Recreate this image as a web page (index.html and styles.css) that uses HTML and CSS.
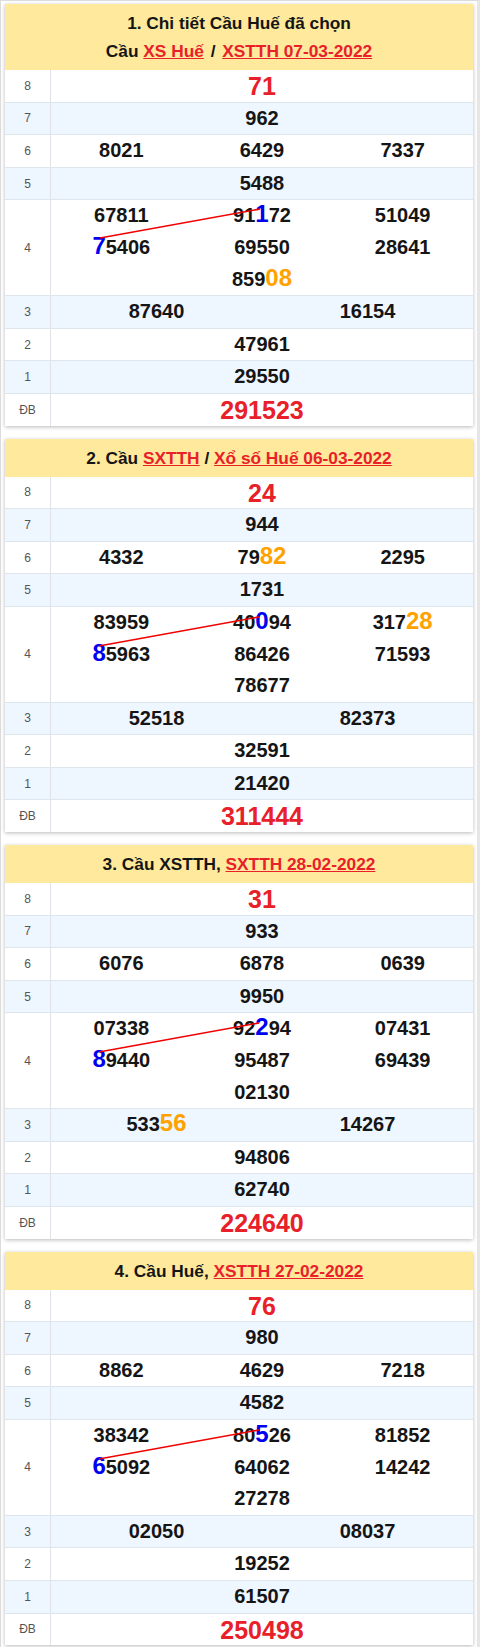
FILE: index.html
```html
<!DOCTYPE html>
<html lang="vi">
<head>
<meta charset="utf-8">
<title>Cầu Huế</title>
<link rel="stylesheet" href="styles.css">
</head>
<body>
<div class="page">

  <div class="card">
    <div class="card-head">
      <div>1. Chi tiết Cầu Huế đã chọn</div>
      <div>Cầu <a class="lnk">XS Huế</a> <span class="sep">/</span> <a class="lnk">XSTTH 07-03-2022</a></div>
    </div>
    <div class="row"><div class="lbl">8</div><div class="val"><span class="sp">71</span></div></div>
    <div class="row alt"><div class="lbl">7</div><div class="val">962</div></div>
    <div class="row"><div class="lbl">6</div><div class="val c3"><span>8021</span><span>6429</span><span>7337</span></div></div>
    <div class="row alt"><div class="lbl">5</div><div class="val">5488</div></div>
    <div class="row"><div class="lbl">4</div>
      <div class="val c3 g4">
        <div class="col"><span>67811</span><span><span class="hb">7</span>5406</span></div>
        <div class="col"><span>91<span class="hb">1</span>72</span><span>69550</span><span>859<span class="ho">08</span></span></div>
        <div class="col"><span>51049</span><span>28641</span></div>
        <svg class="link-line"><line x1="49" y1="38" x2="209" y2="9"/></svg>
      </div>
    </div>
    <div class="row alt"><div class="lbl">3</div><div class="val c2"><span>87640</span><span>16154</span></div></div>
    <div class="row"><div class="lbl">2</div><div class="val">47961</div></div>
    <div class="row alt"><div class="lbl">1</div><div class="val">29550</div></div>
    <div class="row"><div class="lbl">ĐB</div><div class="val"><span class="sp">291523</span></div></div>
  </div>

  <div class="card">
    <div class="card-head">
      <div>2. Cầu <a class="lnk">SXTTH</a> / <a class="lnk">Xổ số Huế 06-03-2022</a></div>
    </div>
    <div class="row"><div class="lbl">8</div><div class="val"><span class="sp">24</span></div></div>
    <div class="row alt"><div class="lbl">7</div><div class="val">944</div></div>
    <div class="row"><div class="lbl">6</div><div class="val c3"><span>4332</span><span>79<span class="ho">82</span></span><span>2295</span></div></div>
    <div class="row alt"><div class="lbl">5</div><div class="val">1731</div></div>
    <div class="row"><div class="lbl">4</div>
      <div class="val c3 g4">
        <div class="col"><span>83959</span><span><span class="hb">8</span>5963</span></div>
        <div class="col"><span>40<span class="hb">0</span>94</span><span>86426</span><span>78677</span></div>
        <div class="col"><span>317<span class="ho">28</span></span><span>71593</span></div>
        <svg class="link-line"><line x1="48" y1="39" x2="208" y2="10"/></svg>
      </div>
    </div>
    <div class="row alt"><div class="lbl">3</div><div class="val c2"><span>52518</span><span>82373</span></div></div>
    <div class="row"><div class="lbl">2</div><div class="val">32591</div></div>
    <div class="row alt"><div class="lbl">1</div><div class="val">21420</div></div>
    <div class="row"><div class="lbl">ĐB</div><div class="val"><span class="sp">311444</span></div></div>
  </div>

  <div class="card">
    <div class="card-head">
      <div>3. Cầu XSTTH, <a class="lnk">SXTTH 28-02-2022</a></div>
    </div>
    <div class="row"><div class="lbl">8</div><div class="val"><span class="sp">31</span></div></div>
    <div class="row alt"><div class="lbl">7</div><div class="val">933</div></div>
    <div class="row"><div class="lbl">6</div><div class="val c3"><span>6076</span><span>6878</span><span>0639</span></div></div>
    <div class="row alt"><div class="lbl">5</div><div class="val">9950</div></div>
    <div class="row"><div class="lbl">4</div>
      <div class="val c3 g4">
        <div class="col"><span>07338</span><span><span class="hb">8</span>9440</span></div>
        <div class="col"><span>92<span class="hb">2</span>94</span><span>95487</span><span>02130</span></div>
        <div class="col"><span>07431</span><span>69439</span></div>
        <svg class="link-line"><line x1="48" y1="39" x2="208" y2="10"/></svg>
      </div>
    </div>
    <div class="row alt"><div class="lbl">3</div><div class="val c2"><span>533<span class="ho">56</span></span><span>14267</span></div></div>
    <div class="row"><div class="lbl">2</div><div class="val">94806</div></div>
    <div class="row alt"><div class="lbl">1</div><div class="val">62740</div></div>
    <div class="row"><div class="lbl">ĐB</div><div class="val"><span class="sp">224640</span></div></div>
  </div>

  <div class="card">
    <div class="card-head">
      <div>4. Cầu Huế, <a class="lnk">XSTTH 27-02-2022</a></div>
    </div>
    <div class="row"><div class="lbl">8</div><div class="val"><span class="sp">76</span></div></div>
    <div class="row alt"><div class="lbl">7</div><div class="val">980</div></div>
    <div class="row"><div class="lbl">6</div><div class="val c3"><span>8862</span><span>4629</span><span>7218</span></div></div>
    <div class="row alt"><div class="lbl">5</div><div class="val">4582</div></div>
    <div class="row"><div class="lbl">4</div>
      <div class="val c3 g4">
        <div class="col"><span>38342</span><span><span class="hb">6</span>5092</span></div>
        <div class="col"><span>80<span class="hb">5</span>26</span><span>64062</span><span>27278</span></div>
        <div class="col"><span>81852</span><span>14242</span></div>
        <svg class="link-line"><line x1="48" y1="39" x2="208" y2="10"/></svg>
      </div>
    </div>
    <div class="row alt"><div class="lbl">3</div><div class="val c2"><span>02050</span><span>08037</span></div></div>
    <div class="row"><div class="lbl">2</div><div class="val">19252</div></div>
    <div class="row alt"><div class="lbl">1</div><div class="val">61507</div></div>
    <div class="row"><div class="lbl">ĐB</div><div class="val"><span class="sp">250498</span></div></div>
  </div>

</div>
</body>
</html>
```

FILE: styles.css
```css
* { box-sizing: border-box; }

body {
  margin: 0;
  background: #fff;
  font-family: "Liberation Sans", Arial, sans-serif;
  color: #111;
}

.page {
  border-top: 1px solid #dcdcdc;
  border-left: 1px solid #dcdcdc;
  border-right: 3px solid #e6e6e6;
  padding: 3px 4px 2px 4px;
}

.card {
  background: #fff;
  box-shadow: 0 1px 4px rgba(0, 0, 0, 0.28);
  margin-bottom: 13px;
}
.card:last-child { margin-bottom: 0; }

.card-head {
  background: #ffe99c;
  text-align: center;
  font-weight: bold;
  font-size: 17.3px;
  line-height: 28px;
  padding: 5px 0;
  color: #151515;
}

.lnk {
  color: #e8202a;
  text-decoration: underline;
}

.sep { padding: 0 2px; }

.row {
  display: grid;
  grid-template-columns: 46px 1fr;
  border-bottom: 1px solid #dfe5ec;
}
.row:last-child { border-bottom: none; }
.row.alt { background: #eef6ff; }

.lbl {
  border-right: 1px solid #dfe3e8;
  font-size: 12px;
  color: #555;
  display: flex;
  align-items: center;
  justify-content: center;
}

.val {
  text-align: center;
  font-weight: bold;
  font-size: 20px;
  line-height: 31.6px;
  color: #151515;
}

.c3 {
  display: grid;
  grid-template-columns: repeat(3, 1fr);
}
.c2 {
  display: grid;
  grid-template-columns: repeat(2, 1fr);
}

.col {
  display: flex;
  flex-direction: column;
}

.sp {
  color: #e8202a;
  font-size: 25px;
  line-height: 1;
  vertical-align: -3px;
}
.hb {
  color: #0000f0;
  font-size: 24px;
  line-height: 1;
}
.ho {
  color: #ffa200;
  font-size: 24px;
  line-height: 1;
}

.g4 { position: relative; }

.link-line {
  position: absolute;
  left: 0;
  top: 0;
  width: 100%;
  height: 100%;
  overflow: visible;
  pointer-events: none;
}
.link-line line {
  stroke: #f20000;
  stroke-width: 1.6;
}
```
